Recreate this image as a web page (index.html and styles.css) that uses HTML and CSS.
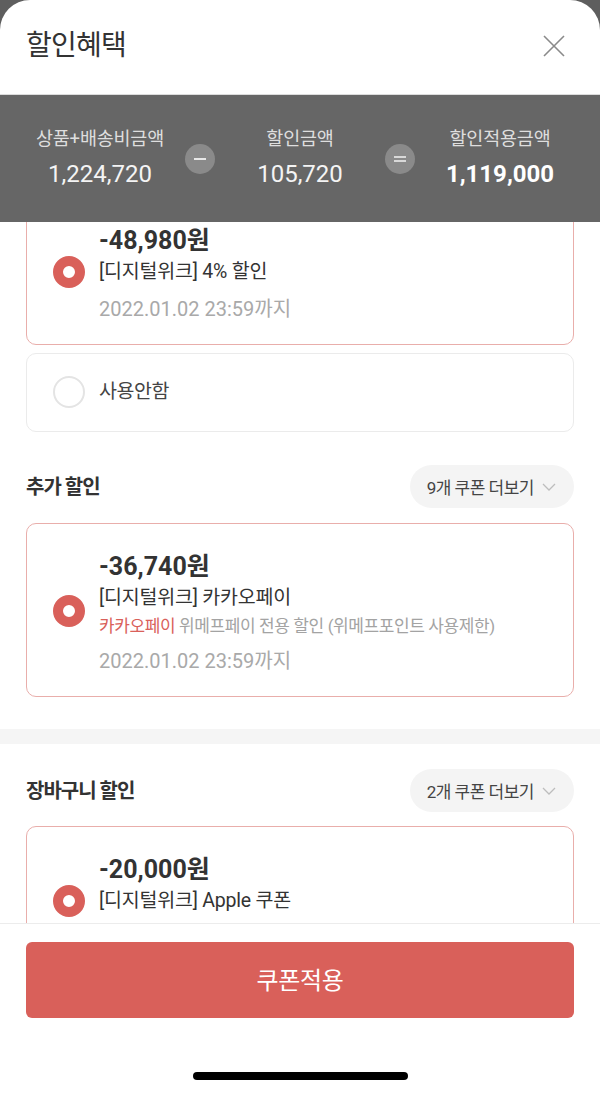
FILE: index.html
```html
<!DOCTYPE html>
<html lang="ko">
<head>
<meta charset="utf-8">
<title>할인혜택</title>
<link rel="stylesheet" href="styles.css">
</head>
<body>
<div class="sheet">
  <header class="header">
    <h1 class="title">할인혜택</h1>
    <button class="close" aria-label="닫기">
      <svg width="22" height="22" viewBox="0 0 22 22"><path d="M1 1L21 21M21 1L1 21" stroke="#8a8a8a" stroke-width="1.6" fill="none"/></svg>
    </button>
  </header>

  <section class="summary">
    <div class="sum-col">
      <div class="sum-label">상품+배송비금액</div>
      <div class="sum-value">1,224,720</div>
    </div>
    <div class="op"><span class="op-minus"></span></div>
    <div class="sum-col">
      <div class="sum-label">할인금액</div>
      <div class="sum-value">105,720</div>
    </div>
    <div class="op"><span class="op-eq"></span></div>
    <div class="sum-col">
      <div class="sum-label">할인적용금액</div>
      <div class="sum-value strong">1,119,000</div>
    </div>
  </section>

  <main class="scroll">
    <div class="scroll-inner">
      <div class="card selected first">
        <span class="radio on"></span>
        <div class="info">
          <div class="amount">-48,980원</div>
          <div class="name">[디지털위크] 4% 할인</div>
          <div class="date">2022.01.02 23:59까지</div>
        </div>
      </div>
      <div class="card plain">
        <span class="radio"></span>
        <div class="none-text">사용안함</div>
      </div>

      <div class="sec-head">
        <h2 class="sec-title">추가 할인</h2>
        <button class="more">9개 쿠폰 더보기<svg width="14" height="8" viewBox="0 0 14 8"><path d="M1 1L7 7L13 1" stroke="#bdbdbd" stroke-width="1.3" fill="none"/></svg></button>
      </div>
      <div class="card selected">
        <span class="radio on"></span>
        <div class="info">
          <div class="amount">-36,740원</div>
          <div class="name">[디지털위크] 카카오페이</div>
          <div class="desc"><span class="hl">카카오페이</span> 위메프페이 전용 할인 (위메프포인트 사용제한)</div>
          <div class="date">2022.01.02 23:59까지</div>
        </div>
      </div>

      <div class="divider"></div>

      <div class="sec-head second">
        <h2 class="sec-title">장바구니 할인</h2>
        <button class="more">2개 쿠폰 더보기<svg width="14" height="8" viewBox="0 0 14 8"><path d="M1 1L7 7L13 1" stroke="#bdbdbd" stroke-width="1.3" fill="none"/></svg></button>
      </div>
      <div class="card selected">
        <span class="radio on"></span>
        <div class="info">
          <div class="amount">-20,000원</div>
          <div class="name">[디지털위크] Apple 쿠폰</div>
          <div class="date">2022.01.02 23:59까지</div>
        </div>
      </div>
    </div>
  </main>

  <footer class="footer">
    <button class="apply">쿠폰적용</button>
    <div class="home-bar"></div>
  </footer>
</div>
</body>
</html>
```

FILE: styles.css
```css
* { box-sizing: border-box; }
html, body { margin: 0; padding: 0; }
body {
  background: #5e5e5e;
  font-family: Roboto, "Noto Sans CJK KR", sans-serif;
  color: #333;
}
.sheet {
  width: 600px;
  height: 1093px;
  background: #fff;
  border-radius: 30px 30px 0 0;
  overflow: hidden;
  display: flex;
  flex-direction: column;
}
.header {
  height: 95px;
  flex: none;
  display: flex;
  align-items: center;
  justify-content: space-between;
  padding: 0 35px 3px 26px;
  border-bottom: 1px solid #dcdcdc;
}
.title {
  margin: 0;
  font-size: 28px;
  font-weight: 400;
  letter-spacing: -0.8px;
  line-height: 36px;
  color: #333;
}
.close {
  border: 0;
  background: none;
  padding: 0;
  width: 22px;
  height: 22px;
  display: flex;
}
.summary {
  height: 127px;
  flex: none;
  background: #666;
  display: grid;
  grid-template-columns: 130px 30px 130px 30px 130px;
  column-gap: 20px;
  padding: 0 35px;
  align-items: center;
}
.sum-col {
  text-align: center;
  white-space: nowrap;
  display: flex;
  flex-direction: column;
  align-items: center;
  gap: 7px;
}
.sum-label {
  font-size: 18.5px;
  line-height: 24px;
  letter-spacing: -0.2px;
  color: #dedede;
}
.sum-value {
  font-size: 24px;
  line-height: 32px;
  color: #f4f4f4;
}
.sum-value.strong {
  font-weight: 700;
  color: #fff;
}
.op {
  width: 30px;
  height: 30px;
  border-radius: 50%;
  background: #8a8a8a;
  display: flex;
  align-items: center;
  justify-content: center;
  flex-direction: column;
  gap: 4px;
}
.op-minus {
  width: 12px;
  height: 2px;
  background: #e8e8e8;
}
.op-eq {
  width: 12px;
  height: 6px;
  border-top: 2px solid #d8d8d8;
  border-bottom: 2px solid #d8d8d8;
}
.scroll {
  flex: 1;
  overflow: hidden;
}
.scroll-inner {
  margin-top: -25px;
  padding: 0 26px;
}
.card {
  display: flex;
  align-items: center;
  gap: 14px;
  border: 1px solid #ebebeb;
  border-radius: 10px;
  padding: 27px 24px 21px 26px;
}
.card.selected { border-color: #e9aeab; }
.card.plain {
  margin-top: 8px;
  padding: 22px 26px 23px;
}
.radio {
  flex: none;
  width: 32px;
  height: 32px;
  border-radius: 50%;
  border: 2px solid #e4e4e4;
  align-self: center;
}
.card.selected .radio { margin-top: -4px; }
.radio.on { border: 10px solid #d9605a; }
.info { min-width: 0; }
.amount {
  font-size: 25px;
  line-height: 32px;
  font-weight: 700;
  color: #333;
}
.name {
  font-size: 19.5px;
  line-height: 30px;
  letter-spacing: -0.2px;
  color: #333;
}
.desc {
  font-size: 17px;
  line-height: 26px;
  letter-spacing: -0.4px;
  color: #a3a3a3;
  white-space: nowrap;
}
.desc .hl { color: #d9605a; }
.date {
  margin-top: 8px;
  font-size: 20px;
  line-height: 28px;
  color: #a9a9a9;
}
.none-text {
  font-size: 19.5px;
  line-height: 28px;
  letter-spacing: -0.4px;
  color: #444;
}
.sec-head {
  margin: 33px 0 15px;
  display: flex;
  align-items: center;
  justify-content: space-between;
}
.sec-head.second { margin-top: 25px; margin-bottom: 14px; }
.sec-title {
  margin: 0;
  font-size: 20px;
  line-height: 28px;
  font-weight: 700;
  letter-spacing: -1px;
  color: #333;
}
.more {
  height: 43px;
  border: 0;
  border-radius: 22px;
  background: #f4f4f4;
  padding: 0 18px 0 17px;
  display: flex;
  align-items: center;
  gap: 8px;
  font-family: inherit;
  font-size: 17px;
  letter-spacing: -0.5px;
  color: #444;
}
.divider {
  margin: 32px -26px 0;
  height: 15px;
  background: #f5f5f5;
}
.footer {
  height: 170px;
  flex: none;
  border-top: 1px solid #ececec;
  padding: 18px 26px 0;
  background: #fff;
  display: flex;
  flex-direction: column;
  align-items: center;
}
.apply {
  width: 100%;
  height: 76px;
  border: 0;
  border-radius: 6px;
  background: #d9605a;
  color: #fff;
  font-family: inherit;
  font-size: 24px;
  letter-spacing: -0.3px;
  padding-bottom: 4px;
}
.home-bar {
  margin-top: 54px;
  width: 215px;
  height: 8px;
  border-radius: 4px;
  background: #000;
}
```
